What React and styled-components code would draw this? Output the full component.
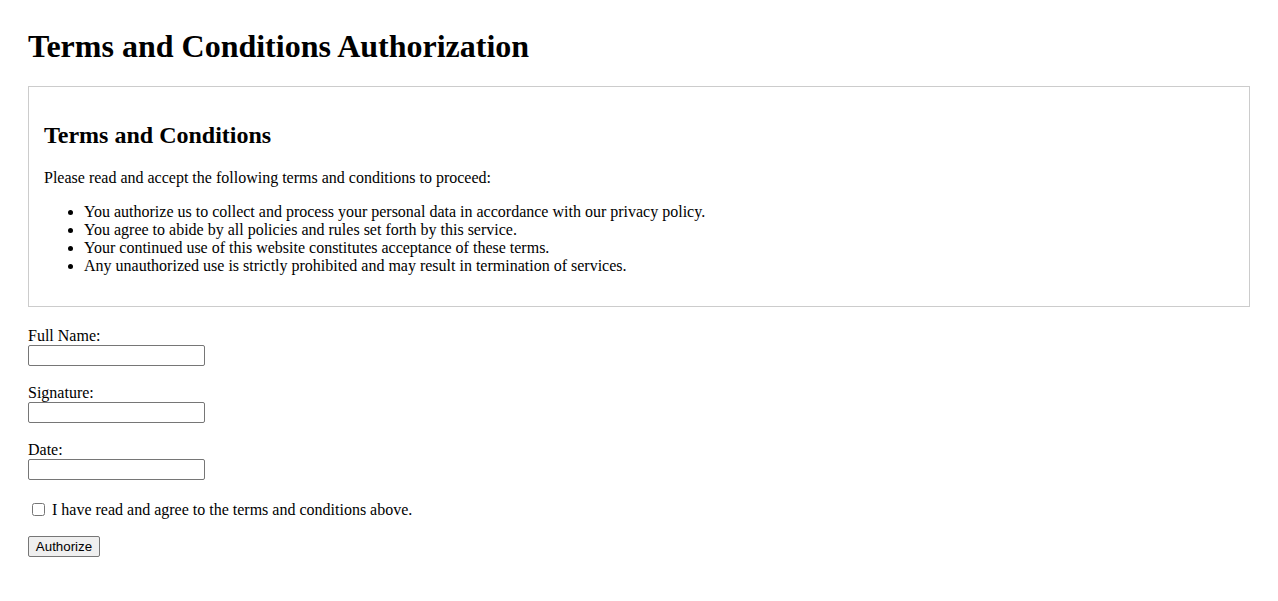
import React from 'react';
import styled, { createGlobalStyle } from 'styled-components';

const GlobalStyle = createGlobalStyle`
  body {
    margin: 8px;
    background: #ffffff;
    color: #000000;
    font-family: "Liberation Serif", "Times New Roman", serif;
    font-size: 16px;
  }
`;

const Page = styled.div`
  padding: 20px;
`;

const Title = styled.h1`
  font-size: 32px;
  font-weight: bold;
  margin: 0 0 21px;
`;

const TermsBox = styled.section`
  border: 1px solid #cccccc;
  padding: 15px;
  margin-bottom: 19px;
`;

const TermsTitle = styled.h2`
  font-size: 24px;
  font-weight: bold;
  margin: 20px 0;
`;

const Intro = styled.p`
  margin: 16px 0;
`;

const TermsList = styled.ul`
  margin: 16px 0;
  padding-left: 40px;
`;

const Form = styled.form`
  display: flex;
  flex-direction: column;
  align-items: flex-start;
`;

const Field = styled.div`
  display: flex;
  flex-direction: column;
  align-items: flex-start;
  margin-bottom: 17px;
`;

const Label = styled.label`
  line-height: 20px;
  margin-bottom: -1px;
`;

const TextInput = styled.input`
  width: 177px;
  height: 21px;
  box-sizing: border-box;
  border: 1px solid #767676;
  border-radius: 2px;
  padding: 1px 2px;
  font-family: "Liberation Sans", Arial, sans-serif;
  font-size: 13.33px;
`;

const CheckRow = styled.label`
  display: flex;
  align-items: center;
  line-height: 18px;
  margin: 3px 0 17px;
`;

const Checkbox = styled.input`
  width: 13px;
  height: 13px;
  margin: 3px 7px 3px 4px;
`;

const SubmitButton = styled.button`
  width: 72px;
  height: 21px;
  padding: 1px 6px;
  font-family: "Liberation Sans", Arial, sans-serif;
  font-size: 13.33px;
  color: #000000;
  background: #efefef;
  border: 1px solid #767676;
  border-radius: 2px;
`;

const terms = [
  'You authorize us to collect and process your personal data in accordance with our privacy policy.',
  'You agree to abide by all policies and rules set forth by this service.',
  'Your continued use of this website constitutes acceptance of these terms.',
  'Any unauthorized use is strictly prohibited and may result in termination of services.',
];

const fields = [
  { id: 'fullName', label: 'Full Name:' },
  { id: 'signature', label: 'Signature:' },
  { id: 'date', label: 'Date:' },
];

const App = () => {
  return (
    <Page>
      <GlobalStyle />
      <Title>Terms and Conditions Authorization</Title>
      <TermsBox>
        <TermsTitle>Terms and Conditions</TermsTitle>
        <Intro>Please read and accept the following terms and conditions to proceed:</Intro>
        <TermsList>
          {terms.map((t) => (
            <li key={t}>{t}</li>
          ))}
        </TermsList>
      </TermsBox>
      <Form onSubmit={(e) => e.preventDefault()}>
        {fields.map((f) => (
          <Field key={f.id}>
            <Label htmlFor={f.id}>{f.label}</Label>
            <TextInput id={f.id} type='text' />
          </Field>
        ))}
        <CheckRow>
          <Checkbox type='checkbox' />
          I have read and agree to the terms and conditions above.
        </CheckRow>
        <SubmitButton type='submit'>Authorize</SubmitButton>
      </Form>
    </Page>
  );
};

export default App;
